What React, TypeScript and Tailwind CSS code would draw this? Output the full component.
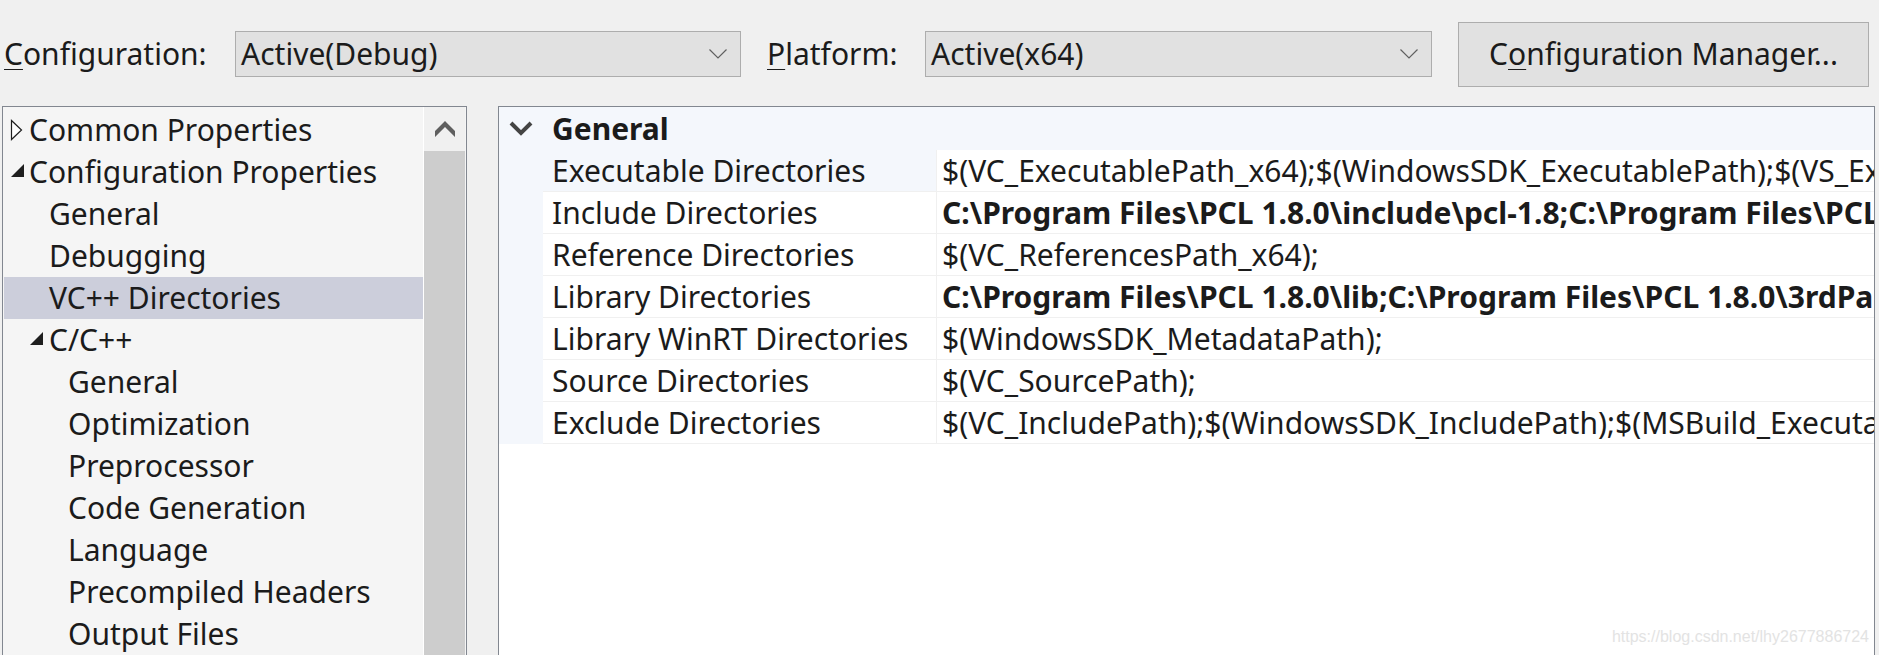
import React from 'react'

type TreeItem = {
  label: string
  level: 0 | 1 | 2
  icon?: 'collapsed' | 'expanded'
  selected?: boolean
}

const TREE: TreeItem[] = [
  { label: 'Common Properties', level: 0, icon: 'collapsed' },
  { label: 'Configuration Properties', level: 0, icon: 'expanded' },
  { label: 'General', level: 1 },
  { label: 'Debugging', level: 1 },
  { label: 'VC++ Directories', level: 1, selected: true },
  { label: 'C/C++', level: 1, icon: 'expanded' },
  { label: 'General', level: 2 },
  { label: 'Optimization', level: 2 },
  { label: 'Preprocessor', level: 2 },
  { label: 'Code Generation', level: 2 },
  { label: 'Language', level: 2 },
  { label: 'Precompiled Headers', level: 2 },
  { label: 'Output Files', level: 2 },
  { label: 'Browse Information', level: 2 },
]

type Prop = { name: string; value: string; bold?: boolean; focused?: boolean }

const PROPS: Prop[] = [
  {
    name: 'Executable Directories',
    value: '$(VC_ExecutablePath_x64);$(WindowsSDK_ExecutablePath);$(VS_ExecutablePath);$(MSBuild_ExecutablePath);$(FxCopDir);$(PATH);',
    focused: true,
  },
  {
    name: 'Include Directories',
    value: 'C:\\Program Files\\PCL 1.8.0\\include\\pcl-1.8;C:\\Program Files\\PCL 1.8.0\\3rdParty\\Boost\\include\\boost-1_61;',
    bold: true,
  },
  { name: 'Reference Directories', value: '$(VC_ReferencesPath_x64);' },
  {
    name: 'Library Directories',
    value: 'C:\\Program Files\\PCL 1.8.0\\lib;C:\\Program Files\\PCL 1.8.0\\3rdParty\\Boost\\lib;C:\\Program Files\\PCL 1.8.0\\3rdParty\\FLANN\\lib;',
    bold: true,
  },
  { name: 'Library WinRT Directories', value: '$(WindowsSDK_MetadataPath);' },
  { name: 'Source Directories', value: '$(VC_SourcePath);' },
  {
    name: 'Exclude Directories',
    value: '$(VC_IncludePath);$(WindowsSDK_IncludePath);$(MSBuild_ExecutablePath);$(VC_LibraryPath_x64);',
  },
]

function ComboChevron() {
  return (
    <svg width="18" height="10" viewBox="0 0 18 10" className="shrink-0">
      <polyline points="0.5,0.5 9,9 17.5,0.5" fill="none" stroke="#606060" strokeWidth="1.2" />
    </svg>
  )
}

function Combo({ value, width }: { value: string; width: string }) {
  return (
    <div
      className={`${width} h-[46px] flex items-center justify-between pl-[5px] pr-[13px] bg-[#e1e1e1] border border-[#adadad]`}
    >
      <span className="leading-none">{value}</span>
      <ComboChevron />
    </div>
  )
}

function TreeIcon({ kind }: { kind: 'collapsed' | 'expanded' }) {
  if (kind === 'collapsed') {
    return (
      <svg width="13" height="22" viewBox="0 0 13 22">
        <polygon points="1.5,1.5 11.5,11 1.5,20.5" fill="#ffffff" stroke="#1e1e1e" strokeWidth="1.2" />
      </svg>
    )
  }
  return (
    <svg width="15" height="15" viewBox="0 0 15 15">
      <polygon points="14,1 14,14 1,14" fill="#1e1e1e" />
    </svg>
  )
}

function TreeRow({ item }: { item: TreeItem }) {
  // indent of the label per level
  const pad = item.level === 0 ? 'pl-[25px]' : item.level === 1 ? 'pl-[45px]' : 'pl-[64px]'
  const iconLeft = item.level === 0 ? 'left-[6px]' : 'left-[25px]'
  return (
    <div
      className={`relative h-[42px] shrink-0 flex items-center whitespace-nowrap ${pad} ${
        item.selected ? 'bg-[#cccedb]' : ''
      }`}
    >
      {item.icon && (
        <span
          className={`absolute ${iconLeft} ${
            item.icon === 'collapsed' ? 'top-[10px]' : 'top-[12px]'
          } flex`}
        >
          <TreeIcon kind={item.icon} />
        </span>
      )}
      <span className="leading-none">{item.label}</span>
    </div>
  )
}

export default function App() {
  return (
    <div className="relative w-[1879px] h-[655px] overflow-hidden bg-[#f0f0f0] text-[#1b1b1b] text-[30px] font-['Noto_Sans',sans-serif]">
      {/* Toolbar */}
      <div className="h-[106px] pt-[2px] flex items-center">
        <div className="w-[235px] pl-[4px] leading-none">
          <span className="underline underline-offset-4 decoration-1">C</span>onfiguration:
        </div>
        <Combo value="Active(Debug)" width="w-[506px]" />
        <div className="ml-[26px] w-[158px] leading-none">
          <span className="underline underline-offset-4 decoration-1">P</span>latform:
        </div>
        <Combo value="Active(x64)" width="w-[507px]" />
        <button className="ml-[26px] w-[411px] h-[65px] bg-[#e1e1e1] border border-[#adadad] leading-none">
          C<span className="underline underline-offset-4 decoration-1">o</span>nfiguration Manager...
        </button>
      </div>

      <div className="flex h-[549px]">
        {/* Tree */}
        <div className="ml-[2px] w-[465px] flex border border-[#828790] border-b-0 bg-[#f5f5f5]">
          <div className="flex-1 flex flex-col pt-[2px] pl-[1px] overflow-hidden">
            {TREE.map((item, i) => (
              <TreeRow key={i} item={item} />
            ))}
          </div>
          <div className="w-[42px] flex flex-col border-l border-[#ffffff] mr-[1px]">
            <div className="h-[44px] shrink-0 flex items-center justify-center bg-[#f0f0f0]">
              <svg width="20" height="16" viewBox="0 0 20 16">
                <polygon points="10,0 20,10 20,16 10,6 0,16 0,10" fill="#5f5f5f" />
              </svg>
            </div>
            <div className="flex-1 bg-[#cdcdcd]" />
          </div>
        </div>

        {/* Property grid */}
        <div className="ml-[31px] w-[1377px] border border-[#828790] border-b-0 bg-white overflow-hidden">
          <div className="h-[43px] flex items-center bg-[#f4f7fc]">
            <span className="ml-[10px] w-[43px] flex">
              <svg width="24" height="15" viewBox="0 0 24 15">
                <polyline
                  points="2,2 12,12 22,2"
                  fill="none"
                  stroke="#444444"
                  strokeWidth="4"
                  strokeLinejoin="miter"
                />
              </svg>
            </span>
            <span className="font-bold leading-none">General</span>
          </div>
          <div className="flex">
            <div className="w-[44px] shrink-0 bg-[#f4f7fc]" />
            <div className="flex-1 flex flex-col min-w-0">
              {PROPS.map((p) => (
                <div key={p.name} className="h-[42px] flex border-b border-[#f0f0f0]">
                  <div
                    className={`w-[394px] shrink-0 pl-[9px] flex items-center border-r border-[#f0f0f0] whitespace-nowrap ${
                      p.focused ? 'bg-[#f4f7fc]' : ''
                    }`}
                  >
                    <span className="leading-none">{p.name}</span>
                  </div>
                  <div className="flex-1 min-w-0 pl-[5px] flex items-center overflow-hidden whitespace-nowrap">
                    <span className={`leading-none ${p.bold ? 'font-bold' : ''}`}>{p.value}</span>
                  </div>
                </div>
              ))}
            </div>
          </div>
        </div>
      </div>

      {/* watermark */}
      <div className="absolute right-[10px] bottom-[6px] text-[16px] text-[#e3e3e3] font-['Liberation_Sans',sans-serif]">
        https://blog.csdn.net/lhy2677886724
      </div>
    </div>
  )
}
